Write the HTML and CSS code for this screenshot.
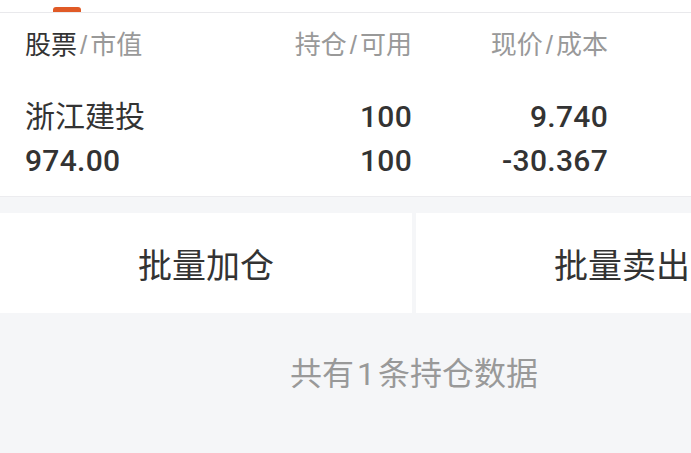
FILE: index.html
```html
<!DOCTYPE html>
<html lang="zh-CN">
<head>
    <meta charset="UTF-8">
    <meta name="viewport" content="width=device-width, initial-scale=1.0">
    <title>持仓</title>
    <link rel="stylesheet" href="styles.css">
</head>
<body>
    <div class="page">
        <div class="tabbar">
            <span class="tab-indicator"></span>
        </div>

        <div class="holdings">
            <div class="row head">
                <div class="cell"><span class="strong">股票</span><span class="sep">/</span>市值</div>
                <div class="cell right">持仓<span class="sep">/</span>可用</div>
                <div class="cell right">现价<span class="sep">/</span>成本</div>
            </div>
            <div class="data">
                <div class="row">
                    <div class="cell name">浙江建投</div>
                    <div class="cell right num">100</div>
                    <div class="cell right num">9.740</div>
                </div>
                <div class="row">
                    <div class="cell num">974.00</div>
                    <div class="cell right num">100</div>
                    <div class="cell right num">-30.367</div>
                </div>
            </div>
        </div>

        <div class="actions">
            <button class="action">批量加仓</button>
            <button class="action">批量卖出</button>
        </div>

        <div class="summary">共有<span class="count">1</span>条持仓数据</div>
    </div>
</body>
</html>
```

FILE: styles.css
```css
html, body {
    margin: 0;
    padding: 0;
    overflow: hidden;
}

body {
    font-family: "Liberation Sans", "Noto Sans CJK SC", sans-serif;
    background: #f5f6f8;
    color: #333;
}

.page {
    width: 828px;
    height: 453px;
    background: #f5f6f8;
}

.tabbar {
    height: 12px;
    background: #fff;
    border-bottom: 1px solid #e9e9ec;
    position: relative;
}

.tab-indicator {
    position: absolute;
    left: 53px;
    bottom: 0;
    width: 28px;
    height: 5px;
    border-radius: 3px 3px 0 0;
    background: #e05a26;
}

.holdings {
    background: #fff;
    border-bottom: 1px solid #ececef;
    padding-left: 25px;
}

.row {
    display: grid;
    grid-template-columns: 237px 150px 196px 220px;
    height: 44px;
    line-height: 44px;
    white-space: nowrap;
}

.row.head {
    height: 64px;
    line-height: 64px;
    font-size: 26px;
    color: #999;
}

.right {
    text-align: right;
}

.strong {
    color: #333;
}

.sep {
    margin: 0 3px;
}

.data {
    padding: 18px 0 13px;
}

.name {
    font-size: 30px;
    color: #333;
}

.num {
    font-family: Roboto, "Liberation Sans", sans-serif;
    font-weight: 500;
    font-size: 30px;
    letter-spacing: 0.3px;
    color: #333;
}

.actions {
    display: flex;
    gap: 4px;
    margin-top: 16px;
}

.action {
    flex: 1;
    height: 100px;
    border: none;
    background: #fff;
    font-family: "Noto Sans CJK SC", sans-serif;
    font-size: 34px;
    color: #333;
    padding: 0;
}

.summary {
    height: 120px;
    line-height: 116px;
    text-align: center;
    font-family: "Noto Sans CJK SC", sans-serif;
    font-size: 32px;
    color: #999;
}

.count {
    font-family: Roboto, sans-serif;
    margin: 0 3px;
}
```
